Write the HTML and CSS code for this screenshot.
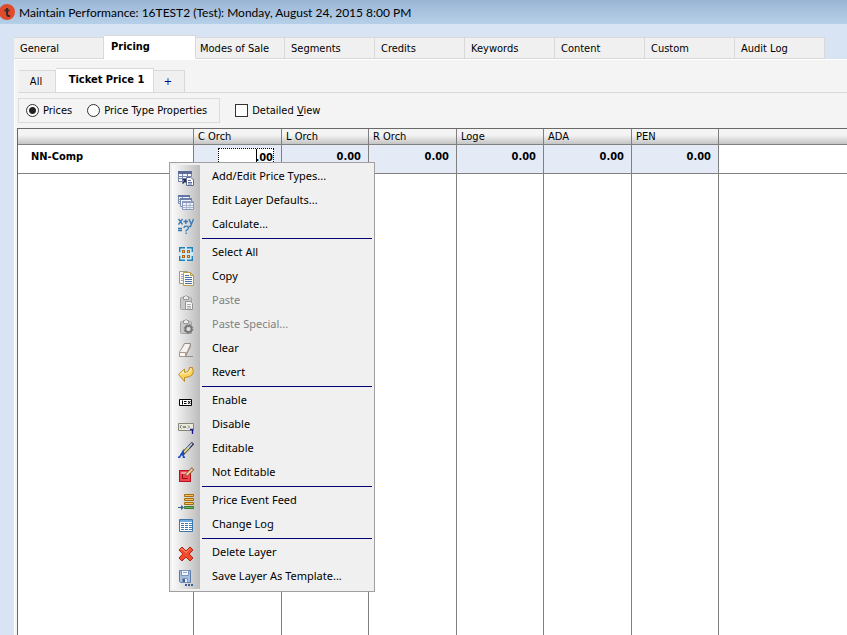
FILE: index.html
```html
<!DOCTYPE html>
<html lang="en">
  <head>
    <meta charset="UTF-8" />
    <meta name="viewport" content="width=device-width, initial-scale=1.0" />
    <title>Maintain Performance</title>
    <link rel="stylesheet" href="styles.css">
  </head>
  <body>
    <header class="title-bar">
      <svg class="logo" width="15" height="16" viewBox="0 0 15 16">
        <circle cx="7" cy="8" r="8" fill="#de4b2d" />
        <path d="M7 4v6q0 2 2 2h1M4.500 6.500h5" fill="none" stroke="#3a2a2a" stroke-width="2" />
      </svg>
      <h1>Maintain Performance: 16TEST2 (Test): Monday, August 24, 2015 8:00 PM</h1>
    </header>

    <nav class="tabs main-tabs">
      <button>General</button>
      <button class="active">Pricing</button>
      <button>Modes of Sale</button>
      <button>Segments</button>
      <button>Credits</button>
      <button>Keywords</button>
      <button>Content</button>
      <button>Custom</button>
      <button>Audit Log</button>
    </nav>

    <main class="panel">
      <nav class="tabs sub-tabs">
        <button>All</button>
        <button class="active">Ticket Price 1</button>
        <button class="add">+</button>
      </nav>

      <div class="options">
        <div class="view-mode">
          <label><input type="radio" name="mode" checked />Prices</label>
          <label><input type="radio" name="mode" />Price Type Properties</label>
        </div>
        <label><input type="checkbox" /><span>Detailed <u>V</u>iew</span></label>
      </div>

      <div class="grid">
        <table>
          <colgroup>
            <col class="col-name" />
            <col class="col-wide" />
            <col class="col-price" />
            <col class="col-wide" />
            <col class="col-price" />
            <col class="col-wide" />
            <col class="col-price" />
            <col />
          </colgroup>
          <thead>
            <tr>
              <th></th>
              <th>C Orch</th>
              <th>L Orch</th>
              <th>R Orch</th>
              <th>Loge</th>
              <th>ADA</th>
              <th>PEN</th>
              <th></th>
            </tr>
          </thead>
          <tbody>
            <tr class="price-row">
              <td class="name">NN-Comp</td>
              <td class="price editing"><input type="text" value=".00" aria-label="C Orch price" /></td>
              <td class="price">0.00</td>
              <td class="price">0.00</td>
              <td class="price">0.00</td>
              <td class="price">0.00</td>
              <td class="price">0.00</td>
              <td></td>
            </tr>
            <tr class="filler">
              <td></td>
              <td></td>
              <td></td>
              <td></td>
              <td></td>
              <td></td>
              <td></td>
              <td></td>
            </tr>
          </tbody>
        </table>

        <div class="menu">
          <button>
            <svg viewBox="0 0 16 16">
              <path fill="#5b6b95" d="M0 1h14v3H0z" />
              <path fill="#f4f7fc" d="M0 4h14v8H0z" />
              <path fill="none" stroke="#7585ab" d="M.5 4v7.500M4.500 4v7.500M9.500 4v7.500M13.500 4v3M0 6.500h14M0 8.500h10M0 11.500h7" />
              <path fill="#fff" stroke="#5b6b95" d="M8.500 7.500h4l3 2v6h-7z" />
              <path stroke="#5b6b95" d="M10 10.500h3M10 12.500h4M10 14h4" />
              <path fill="#222c4c" d="M4 9h4v4l-1-1-2 2-1-1 2-2z" />
            </svg>
            Add/Edit Price Types...
          </button>
          <button>
            <svg viewBox="0 0 16 16">
              <path fill="#eef2fa" stroke="#7b8bb2" d="M.5 1.500h11v8H.5z" />
              <path fill="#6375a2" d="M0 1h12v2H0z" />
              <path stroke="#8c9abd" d="M1 5.500h10M1 7.500h10M4.500 3v6" />
              <path fill="#eef2fa" stroke="#7b8bb2" d="M2.500 4.500h11v8h-11z" />
              <path fill="#6f80aa" d="M2 4h12v2H2z" />
              <path fill="#eef2fa" stroke="#8c9abd" d="M4.500 7.500h11v8h-11z" />
              <path fill="#8b9abd" d="M4 7h12v2H4z" />
              <path stroke="#a9b5cf" d="M5 11.500h10M5 13.500h10M8.500 9v6M12 9v6" />
            </svg>
            Edit Layer Defaults...
          </button>
          <button>
            <svg viewBox="0 0 16 16">
              <path fill="none" stroke="#3479b5" stroke-width="1.300" d="M.5 1l4 5.500M4.500 1l-4 5.500M5.500 3.500h4.500M7.800 1.500v4.500M11 1l2.200 5M15.500 1l-3 7.500h-1.500M0 10.500h4M0 12.500h4M6 10q0-1.800 2.200-1.800t2.200 1.800q0 1-1.300 1.800t-.9 1.700M8.200 14.500v1.500" />
            </svg>
            Calculate...
          </button>
          <hr />
          <button>
            <svg viewBox="0 0 16 16">
              <path fill="#c9ecfa" d="M1 1h14v14H1z" />
              <path fill="none" stroke="#2581b8" stroke-width="1.400" d="M1.700 6V1.700H7M9 1.700h5.300V6M14.300 10v4.300H9M7 14.300H1.700V10" />
              <path fill="#bd6418" d="M4 4h3v3H4zM9 4h3v3H9zM4 9h3v3H4zM9 9h3v3H9z" />
              <path fill="#ffc16c" d="M5 5h1v1H5zM10 5h1v1h-1zM5 10h1v1H5zM10 10h1v1h-1z" />
            </svg>
            Select All
          </button>
          <button>
            <svg viewBox="0 0 16 16">
              <path fill="#faf7e8" stroke="#a49b80" d="M1.500 1.500h8v12h-8z" />
              <path stroke="#91a9d1" d="M3 4.500h3M3 6.500h3M3 8.500h3M3 10.500h3" />
              <path fill="#fffdf2" stroke="#b89c4c" d="M5.500 2.500h7l3 3v10h-10z" />
              <path fill="#f5d98c" stroke="#b89c4c" d="M12.500 2.500v3h3z" />
              <path stroke="#496fae" d="M7 5.500h4M7 7.500h7M7 9.500h7M7 11.500h7M7 13.500h7" />
            </svg>
            Copy
          </button>
          <button disabled>
            <svg viewBox="0 0 16 16">
              <rect x="2.500" y="3.500" width="11" height="12" rx="1" fill="#c8c8c8" stroke="#a3a3a3" />
              <path fill="#eee" stroke="#999" d="M5.500 2.500h1.500q1-2.500 2 0h1.500v3h-5z" />
              <path fill="#f5f5f5" stroke="#929292" d="M7.500 7.500h5l2 2v6h-7z" />
              <path stroke="#aaa" d="M9 10.500h4M9 12.500h4M9 14h4" />
            </svg>
            Paste
          </button>
          <button disabled>
            <svg viewBox="0 0 16 16">
              <rect x="2.500" y="3.500" width="11" height="12" rx="1" fill="#c8c8c8" stroke="#a3a3a3" />
              <path fill="#eee" stroke="#999" d="M5.500 2.500h1.500q1-2.500 2 0h1.500v3h-5z" />
              <circle cx="10.500" cy="11" r="3" fill="none" stroke="#777" stroke-width="2" />
              <circle cx="10.500" cy="11" r="4.400" fill="none" stroke="#777" stroke-dasharray="2 1.450" />
              <circle cx="10.500" cy="11" r="2" fill="#ddd" />
            </svg>
            Paste Special...
          </button>
          <button>
            <svg viewBox="0 0 16 16">
              <path fill="#b9aca2" stroke="#9b8c82" d="M6.500 1.500h6v3l-5 10h-6v-4z" />
              <path fill="#f6f2ee" d="M7 2h5l-3.500 8H2z" />
              <path fill="#fbf8f5" stroke="#a8998f" d="M1.500 10.500h6v4h-6z" />
              <path stroke="#9b8c82" d="M7 14.500h8" />
            </svg>
            Clear
          </button>
          <button>
            <svg viewBox="0 0 16 16">
              <path fill="#fbd25c" stroke="#bd8a25" stroke-linejoin="round" d="M.5 8.500l6-5.500v3.500q4.500 0 5-5h3q3.500 9.500-8 10v4z" />
              <path fill="none" stroke="#fff0ae" stroke-width="1.200" d="M2 8.500l3.500-3v2q6.500 .5 7.500-5" />
            </svg>
            Revert
          </button>
          <hr />
          <button>
            <svg viewBox="0 0 16 16">
              <path fill="#fff" stroke="#000" d="M1.500 5.500h12v6h-12z" />
              <path fill="none" stroke="#000" d="M4.500 6.500v4M6 7.500h2.500M6 9.500h2.500M10 7l2.500 3M12.500 7L10 10" />
            </svg>
            Enable
          </button>
          <button>
            <svg viewBox="0 0 16 16">
              <path fill="#e9e9dc" stroke="#85857b" d="M.5 5.500h15v7H.5z" />
              <path fill="none" stroke="#777" d="M2 9l1.500-2M2 9l1.500 1.500M5 8l1 2 1-2 1 2M10 7.500l1.500 1.500-1.500 1.500" />
              <path fill="none" stroke="#17178f" stroke-width="1.300" d="M12 11.500h2.500V16" />
            </svg>
            Disable
          </button>
          <button>
            <svg viewBox="0 0 16 16">
              <path stroke="#33365a" stroke-width="3.400" d="M5 11.500l10-10.500" />
              <path stroke="#e0d874" stroke-width="2" d="M6 10.500l5-5.500" />
              <path stroke="#c9d0e2" stroke-width="1.500" d="M10 6l4-4.500" />
              <path fill="none" stroke="#174cc4" stroke-width="1.500" d="M0 15.300h1.500l3.500-6 .5 6H7M2 12.700h4" />
            </svg>
            Editable
          </button>
          <button>
            <svg viewBox="0 0 16 16">
              <rect x="1.500" y="4.500" width="11" height="11" fill="#f0434e" stroke="#b51320" />
              <path fill="#ff9aa0" d="M3 6h8v2H3z" />
              <path fill="none" stroke="#8d0c19" d="M4.500 8v4.500h5" />
              <path stroke="#85502d" stroke-width="3.400" d="M8 9.500l7-7" />
              <path stroke="#f0c996" stroke-width="2" d="M8.500 9l6-6" />
            </svg>
            Not Editable
          </button>
          <hr />
          <button>
            <svg viewBox="0 0 16 16">
              <path fill="#ffc34a" stroke="#a36a18" d="M6.500.5h9v2h-9zM6.500 4.500h9v2h-9zM6.500 8.500h9v2h-9z" />
              <path fill="#6bb95b" stroke="#397933" d="M6.500 12.500h9v2h-9z" />
              <path fill="#2c6499" d="M0 13h3v-2l3 2.500L3 16v-2H0z" />
            </svg>
            Price Event Feed
          </button>
          <button>
            <svg viewBox="0 0 16 16">
              <path fill="#fff" stroke="#3c78ac" d="M1.500 1.500h13v12h-13z" />
              <path fill="#6eace0" d="M2 2h12v2H2z" />
              <path stroke="#3d78b4" stroke-dasharray="3 1" d="M3 5.500h11M3 7.500h11M3 9.500h11M3 11.500h11" />
            </svg>
            Change Log
          </button>
          <hr />
          <button>
            <svg viewBox="0 0 16 16">
              <path fill="#f24a2b" stroke="#b52012" stroke-linejoin="round" d="M1 4l3-3 4 4 4-4 3 3-3.800 4 3.800 4-3 3-4-4-4 4-3-3 3.800-4z" />
              <path fill="none" stroke="#ff9c82" d="M2.500 4L4 2.500l4 4 4-4" />
            </svg>
            Delete Layer
          </button>
          <button>
            <svg viewBox="0 0 16 16">
              <path fill="#a9bddc" stroke="#5c7caf" d="M1.500.5h11v12h-10l-1-1z" />
              <path fill="#f6f9fd" stroke="#7894bd" d="M3.500.5h7v5h-7z" />
              <path stroke="#8ca5c9" d="M5 2.500h4" />
              <path fill="#e9eff8" stroke="#7894bd" d="M4.500 8.500h5v4h-5z" />
              <path fill="#3c5d96" d="M5 9h2v3H5zM7 14h2v2H7zM10 14h2v2h-2zM13 14h2v2h-2z" />
            </svg>
            Save Layer As Template...
          </button>
        </div>
      </div>
    </main>
  </body>
</html>
```
FILE: styles.css
```css
* {
  box-sizing: border-box;
  margin: 0;
  padding: 0;
}
body {
  display: flex;
  flex-direction: column;
  height: 100vh;
  overflow: hidden;
  background-color: #d8e3f3;
  color: #000;
  font-family: "DejaVu Sans Condensed", "Noto Sans", sans-serif;
  font-size: 11px;
  line-height: 16px;
}
button,
input {
  font: inherit;
  color: inherit;
}
.title-bar {
  display: flex;
  align-items: center;
  gap: 4px;
  flex: none;
  height: 24px;
  background: linear-gradient(#9ab5d4, #b7d0e9);
}
.title-bar h1 {
  padding-top: 2px;
  font-family: Lato, sans-serif;
  font-size: 12px;
  font-weight: normal;
  white-space: nowrap;
}

/* Tabs */
.tabs {
  display: flex;
  align-items: flex-end;
  flex: none;
}
.tabs button {
  height: 22px;
  border: 1px solid #d9d9d9;
  border-left: none;
  background-color: #f0f0f0;
  white-space: nowrap;
}
.tabs .active {
  height: 24px;
  padding-bottom: 2px;
  border-bottom-color: #fff;
  background-color: #fff;
  font-weight: bold;
}
.main-tabs {
  padding: 11px 0 0 14px;
}
.main-tabs button {
  width: 90px;
  padding-top: 1px;
  padding-left: 6px;
  text-align: left;
}
.main-tabs .active {
  width: 92px;
  padding-left: 7px;
}
.main-tabs .active + button {
  width: 89px;
  padding-left: 4px;
}
.panel {
  display: flex;
  flex-direction: column;
  flex: 1;
  min-height: 0;
  margin-left: 14px;
  padding-left: 3px;
  border-top: 1px solid #fff;
  border-left: 1px solid #fff;
  background-color: #f4f4f4;
}
.sub-tabs {
  padding: 8px 0 0 1px;
  border-bottom: 1px solid #d9d9d9;
}
.sub-tabs button {
  width: 37px;
  padding-right: 2px;
  border-bottom: none;
}
.sub-tabs .active {
  width: 98px;
  padding-left: 6px;
}
.sub-tabs .add {
  width: 31px;
  color: #000080;
}

/* Options */
.options {
  display: flex;
  align-items: center;
  flex: none;
  gap: 15px;
  height: 35px;
}
.options label {
  display: flex;
  align-items: center;
  gap: 4px;
  white-space: nowrap;
}
.view-mode {
  display: flex;
  gap: 15px;
  height: 25px;
  padding: 0 12px 0 7px;
  border: 1px solid #dcdcdc;
}
.options input {
  appearance: none;
  width: 13px;
  height: 13px;
  border: 1px solid #333;
  background-color: #fff;
}
.options input[type="radio"] {
  border-radius: 50%;
}
.options input[type="radio"]:checked {
  background: radial-gradient(#222 3px, #fff 4px);
}

/* Price grid */
.grid {
  position: relative;
  flex: 1;
  min-height: 0;
  margin-left: -1px;
}
table {
  width: 100%;
  height: 100%;
  table-layout: fixed;
  border-spacing: 0;
  border-top: 1px solid #696969;
  border-left: 1px solid #696969;
  background-color: #fff;
}
.col-name {
  width: 176px;
}
.col-price {
  width: 87px;
}
.col-wide {
  width: 88px;
}
th,
td {
  border-right: 1px solid #808080;
  border-bottom: 1px solid #808080;
}
th:last-child,
td:last-child {
  border-right: none;
}
th {
  height: 16px;
  padding-left: 4px;
  background: linear-gradient(#f4f4f4 40%, #c4c4c4);
  font-weight: normal;
  line-height: 15px;
  text-align: left;
}
.price-row td {
  height: 29px;
  padding-bottom: 4px;
  font-weight: bold;
}
.price-row .name {
  padding-left: 13px;
}
.price {
  padding-right: 7px;
  background-color: #e4ebf7;
  text-align: right;
}
.price input {
  display: block;
  width: 56px;
  height: 18px;
  margin-left: auto;
  border: 1px dotted #000;
  outline: none;
  background: linear-gradient(#000, #000) 37px 0 / 1px 100% no-repeat #fff;
  font-weight: bold;
  text-align: right;
}
.filler td {
  border-bottom: none;
}

/* Context menu */
.menu {
  position: absolute;
  top: 34px;
  left: 152px;
  width: 206px;
  padding: 1px 2px 3px;
  border: 1px solid #a0a0a0;
  background: linear-gradient(to right, #fbfbfb, #bcbcbc) 2px 2px / 28px calc(100% - 4px) no-repeat #f0f0f0;
  font-family: "Noto Sans", sans-serif;
}
.menu button {
  display: flex;
  align-items: center;
  gap: 18px;
  width: 100%;
  height: 24px;
  padding-left: 6px;
  border: none;
  background: none;
  white-space: nowrap;
}
.menu button:disabled {
  color: #808080;
}
.menu svg {
  flex: none;
  width: 16px;
  height: 16px;
  margin-top: 4px;
}
.menu hr {
  height: 1px;
  margin: 2px 0 1px 30px;
  border: none;
  background-color: #000070;
}
```
